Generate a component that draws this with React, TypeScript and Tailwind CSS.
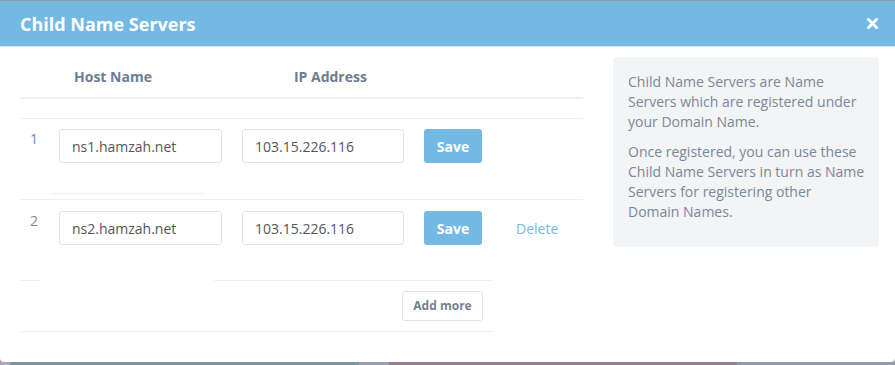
import React from 'react';

const inputClasses =
  "h-[34px] rounded-[3px] border border-[#e3e2dc] bg-white px-[12px] text-[14px] text-[#555] flex items-center";
const saveClasses =
  "h-[34px] w-[58px] rounded-[3px] bg-[#74b8e4] text-white text-[14px] font-bold flex items-center justify-center";

const CloseIcon = () => (
  <svg width="11" height="11" viewBox="0 0 11 11">
    <path d="M1.5 1.5 L9.5 9.5 M9.5 1.5 L1.5 9.5" stroke="white" strokeWidth="3" strokeLinecap="square" />
  </svg>
);

const ServerRow = ({ n, host, ip, canDelete }: { n: number; host: string; ip: string; canDelete?: boolean }) => (
  <div className="flex items-start">
    <div className="w-[39px] pl-[10px] text-[14px] leading-[20px] text-[#7a879c]">{n}</div>
    <div className={inputClasses + " w-[163px]"}>{host}</div>
    <div className={inputClasses + " w-[162px] ml-[20px]"}>{ip}</div>
    <button className={saveClasses + " ml-[20px]"}>Save</button>
    {canDelete && (
      <span className="ml-[34px] h-[34px] flex items-center text-[14px] text-[#74b8e4]">Delete</span>
    )}
  </div>
);

const App = () => {
  return (
    <div className="w-[895px] h-[365px] overflow-hidden flex flex-col bg-[#8d9bb1] font-['Open_Sans',sans-serif]">
      <div className="h-px shrink-0" />
      <div className="h-[361px] shrink-0 bg-white rounded-b-[4px] flex flex-col">
        <div className="h-[46px] shrink-0 bg-[#74b8e4] border-b border-[#e6e6e6] flex items-center justify-between pl-5 pr-[17px]">
          <h1 className="text-[18px] font-bold text-white leading-none">Child Name Servers</h1>
          <CloseIcon />
        </div>
        <div className="flex pl-5">
          <div className="w-[563px]">
            <div className="h-[52px] border-b-2 border-[#f0f0f0] flex items-end pb-[10px] text-[14px] leading-[20px] font-bold text-[#6e7c92]">
              <span className="ml-[54px]">Host Name</span>
              <span className="ml-[142px]">IP Address</span>
            </div>
            <div className="h-[20px] border-b border-[#f0f0f0]" />
            <div className="h-[81px] border-b border-[#f0f0f0] pt-[10px] flex flex-col">
              <ServerRow n={1} host="ns1.hamzah.net" ip="103.15.226.116" />
              <div className="mt-auto mb-[5px] ml-[30px] w-[154px] h-px bg-[#f0f0f0]" />
            </div>
            <div className="h-[81px] pt-[11px] flex flex-col">
              <ServerRow n={2} host="ns2.hamzah.net" ip="103.15.226.116" canDelete />
              <div className="mt-auto flex h-px">
                <div className="w-[21px] bg-[#f0f0f0]" />
                <div className="w-[173px]" />
                <div className="w-[279px] bg-[#f0f0f0]" />
              </div>
            </div>
            <div className="w-[473px] h-[51px] border-b border-[#f0f0f0] flex items-center justify-end pr-[10px]">
              <button className="h-[30px] w-[81px] rounded-[3px] border border-[#e6e4dc] bg-white text-[12px] font-bold text-[#737f93]">
                Add more
              </button>
            </div>
          </div>
          <div className="ml-[30px] mt-[10px] w-[266px] h-[190px] rounded-[4px] bg-[#f2f4f6] pl-[15px] pt-[15px] whitespace-nowrap text-[14px] leading-[20px] text-[#7b879a]">
            <p>
              Child Name Servers are Name<br />
              Servers which are registered under<br />
              your Domain Name.
            </p>
            <p className="mt-[10px]">
              Once registered, you can use these<br />
              Child Name Servers in turn as Name<br />
              Servers for registering other<br />
              Domain Names.
            </p>
          </div>
        </div>
      </div>
      <div className="h-[3px] shrink-0 flex">
        <div className="w-[10px] bg-[#a6adba]" />
        <div className="w-[349px] bg-[#7f959d]" />
        <div className="w-[30px] bg-[#9aa0b2]" />
        <div className="w-[348px] bg-[#948090]" />
        <div className="flex-1 bg-[#9299ab]" />
      </div>
    </div>
  );
};

export default App;
